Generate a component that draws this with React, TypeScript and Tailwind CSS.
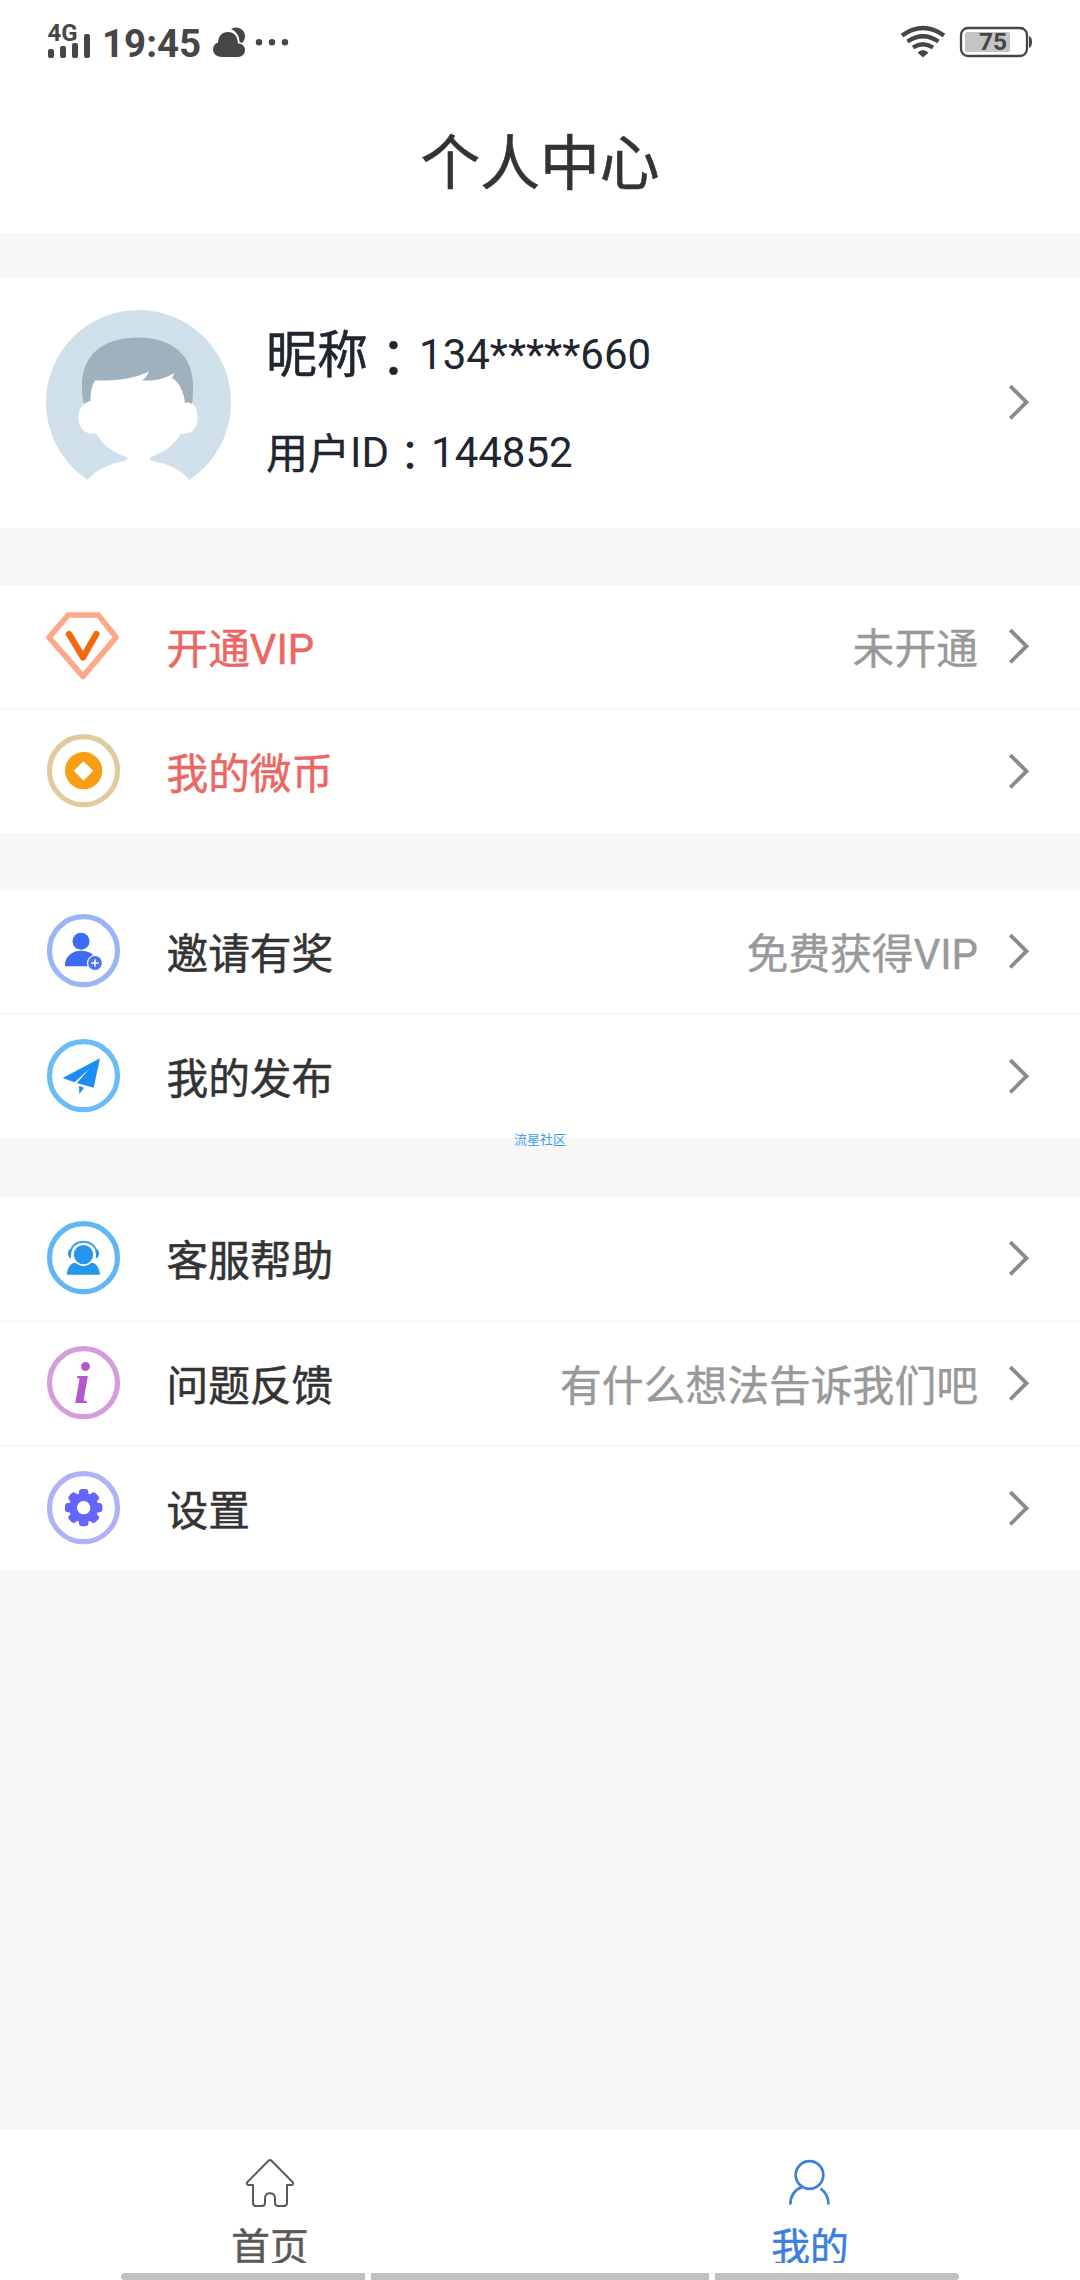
import type { ReactNode } from "react";

const ring = (color: string) => (
  <circle cx="112.500" cy="110" r="102" fill="none" stroke={color} strokeWidth="15.500" />
);

function Icon({ children }: { children: ReactNode }) {
  return (
    <svg className="h-[75px] w-[75px] shrink-0" viewBox="0 0 225 225">
      {children}
    </svg>
  );
}

const VipIcon = () => (
  <Icon>
    <path d="M67 18H157L210 85L111 202L9 85Z" fill="none" stroke="#fca98b" strokeWidth="17" strokeLinejoin="round" />
    <path d="M69 75L111 145L151 75" fill="none" stroke="#f2690d" strokeWidth="19" strokeLinecap="round" strokeLinejoin="round" />
  </Icon>
);

const CoinIcon = () => (
  <Icon>
    {ring("#e0cb9c")}
    <circle cx="113" cy="110" r="56" fill="#f99e14" />
    <path d="M112.500 85L138 110.500L112.500 136L87 110.500Z" fill="#fff" stroke="#fff" strokeWidth="5" strokeLinejoin="round" />
  </Icon>
);

const InviteIcon = () => (
  <Icon>
    {ring("#9ab5f6")}
    <circle cx="105" cy="82" r="25.500" fill="#3e69f3" />
    <path d="M57 157V150C60 124 80 110 106 110C130 110 144 120 150 140V157Z" fill="#3e69f3" />
    <circle cx="147" cy="147" r="22.500" fill="#4b74f3" stroke="#fff" strokeWidth="3.500" />
    <path d="M147 136V158M136 147H158" stroke="#fff" strokeWidth="4.500" />
  </Icon>
);

const PublishIcon = () => (
  <Icon>
    {ring("#69bdf5")}
    <path d="M162 58L50 117L86 130L130 89L93 132L143 146Z" fill="#1b8df5" />
    <path d="M99 141L114 146L100 165Z" fill="#1b8df5" />
  </Icon>
);

const ServiceIcon = () => (
  <Icon>
    {ring("#61b6f4")}
    <circle cx="112.500" cy="101" r="29" fill="#2496ec" />
    <path d="M73 98C74 50 151 50 152 98" fill="none" stroke="#3c9fec" strokeWidth="6" />
    <path d="M75 84C63 86 63 109 75 112ZM150 84C162 86 162 109 150 112Z" fill="#2496ec" />
    <path d="M62 161C64 142 74 125 88 125Q112 146 137 125C151 125 160 142 162 161Z" fill="#2496ec" />
  </Icon>
);

const FeedbackIcon = () => (
  <Icon>
    {ring("#d69ddd")}
    <text x="83" y="171" fontFamily="Liberation Serif, serif" fontSize="178" fontStyle="italic" fontWeight="700" fill="#b457cd">
      i
    </text>
  </Icon>
);

const SettingsIcon = () => (
  <Icon>
    {ring("#b1b1f8")}
    {[0, 45, 90, 135].map((a) => (
      <rect key={a} x="99" y="54" width="28" height="112" rx="9" fill="#6465fb" transform={`rotate(${a} 113 110)`} />
    ))}
    <circle cx="113" cy="110" r="44" fill="#6465fb" />
    <circle cx="113" cy="110" r="20" fill="#fff" />
  </Icon>
);

const Chevron = () => (
  <svg className="h-9 w-[22px] shrink-0" viewBox="0 0 22 36" fill="none" stroke="#8a8a8a" strokeWidth="3.800">
    <path d="M1.200 1L17.500 17.200L1.200 33.400" />
  </svg>
);

type RowProps = { icon: ReactNode; label: string; hint?: string; accent?: boolean };

function Row({ icon, label, hint, accent }: RowProps) {
  return (
    <div className="flex h-[123px] items-center bg-white pl-[46px] pr-[49px] leading-[60px]">
      {icon}
      <span className={`ml-[45.500px] mt-[6px] text-[41.700px] [-webkit-text-stroke:0.5px] ${accent ? "text-[#ec6663]" : "text-[#333]"}`}>{label}</span>
      <span className="ml-auto mt-[6px] mr-[31px] text-[41.800px] text-[#999] [-webkit-text-stroke:0.4px]">{hint}</span>
      <Chevron />
    </div>
  );
}

const Group = ({ children, className }: { children: ReactNode; className: string }) => (
  <section className={`flex flex-col gap-[2px] ${className}`}>{children}</section>
);

const Avatar = () => (
  <svg className="h-[186px] w-[186px] shrink-0" viewBox="0 0 186 186">
    <circle cx="92.500" cy="92.500" r="92.500" fill="#cfe0ea" />
    <path
      d="M42 60H133L142 93C148 91 152 100 151.500 109C151 119 145 125 135 123.500C129 134 118 143 104.500 147C103 149 104 150 107 151C122 154 136 160 143.500 170V186H41.500V170C49 160 63 154 78 151C81 150 82 149 80.500 147C67 143 56 134 50 123.500C40 125 33 119 32.500 109C32 100 36 93 42 93Z"
      fill="#fff"
    />
    <path
      d="M38 94C36 88 36 80 36 72C38 42 60 27.500 92 27.500C125 27.500 146 44 147 74C147 82 147 88 146 94C143 92 141 92 139 93C138 82 133 72 126 68L128.500 63C118 69 107 72 95.500 70C99 69 101 66 103 61.500C88 69 70 71 49 70.500C45 77 44.500 84 44.500 91C42 91 40 92 38 94Z"
      fill="#9eb1bc"
    />
  </svg>
);

const StatusBar = () => (
  <div className="flex h-[90px] items-start text-[#464646]">
    <div className="ml-[46px] mt-[18px] h-10 w-12">
      <svg className="h-10 w-12 overflow-visible" viewBox="46 18 48 40" fill="currentColor">
        <text x="47.500" y="40.500" fontSize="24" fontWeight="700" textLength="30" lengthAdjust="spacingAndGlyphs">4G</text>
        <rect x="48" y="49" width="6" height="9" rx="2" />
        <rect x="60" y="46" width="6" height="12" rx="2" />
        <rect x="72" y="43" width="6" height="15" rx="2" />
        <rect x="84" y="34" width="6" height="24" rx="2" />
      </svg>
    </div>
    <span className="ml-2 mt-[21px] w-[111px] text-[38.500px] font-bold leading-[46px]">19:45</span>
    <svg className="mt-5 h-10 w-20" viewBox="213 20 80 40" fill="currentColor">
      <path d="M231 29C237 25 245 29 245 36C245 39 244 41 242 43L239.500 42C239.500 36 236 31 231 29Z" />
      <path d="M222 57C217 57 213 54 213 49.500C213 46 215 43.500 218 42.500C218.500 36 222 32 228 32C234 32 237.500 36 238 43.500C242 43.500 245 46 245 50C245 54 242 57 238 57Z" />
      <circle cx="259" cy="42.300" r="3.200" />
      <circle cx="272" cy="42.300" r="3.200" />
      <circle cx="285" cy="42.300" r="3.200" />
    </svg>
    <svg className="ml-auto mr-[46px] mt-5 h-10 w-[136px]" viewBox="898 20 136 40" fill="none" stroke="currentColor">
      <path d="M902 35.500Q923 20.500 944 35.500M907.500 41.500Q923 31 938.500 41.500M913 47.500Q923 41 933 47.500" strokeWidth="4.200" />
      <path d="M917.500 52.500Q923 47.500 928.500 52.500L923 57.500Z" fill="currentColor" stroke="none" />
      <rect x="965" y="32" width="45" height="20" rx="2" fill="#c4c4c4" stroke="none" />
      <rect x="961" y="28" width="66" height="28" rx="7" strokeWidth="2.300" />
      <path d="M1029 36Q1032 37 1032 42T1029 48Z" fill="currentColor" stroke="none" />
      <text x="979" y="50" fontSize="24.500" fontWeight="700" fill="currentColor" stroke="none">75</text>
    </svg>
  </div>
);

export default function App() {
  return (
    <div className="relative flex h-[2280px] w-[1080px] flex-col overflow-hidden bg-[#f7f7f7] font-[Roboto,'Noto_Sans_CJK_SC',sans-serif]">
      <header className="h-[233px] bg-white">
        <StatusBar />
        <h1 className="mt-[30px] text-center text-[59.800px] leading-[90px] text-[#333] [-webkit-text-stroke:0.6px]">个人中心</h1>
      </header>

      <section className="mt-[45px] flex h-[250px] items-center bg-white pl-[46px] pr-[49px]">
        <Avatar />
        <div className="ml-[34px] flex flex-col gap-[32px] pb-[2px] font-[Roboto,'Noto_Sans_CJK_TC',sans-serif] text-[42px] leading-[66px] text-[#20252f]">
          <div className="flex items-baseline">
            <span className="translate-y-[4px] text-[51px] [-webkit-text-stroke:0.5px]">
              昵称<span className="inline-block translate-y-[4px]">：</span>
            </span>
            <span>134*****660</span>
          </div>
          <div>
            <span className="inline-block translate-y-[2px] [-webkit-text-stroke:0.4px]">用户</span>ID
            <span className="inline-block translate-y-[4px]">：</span>144852
          </div>
        </div>
        <span className="ml-auto">
          <Chevron />
        </span>
      </section>

      <Group className="mt-[57px]">
        <Row icon={<VipIcon />} label="开通VIP" hint="未开通" accent />
        <Row icon={<CoinIcon />} label="我的微币" accent />
      </Group>
      <Group className="mt-[57px]">
        <Row icon={<InviteIcon />} label="邀请有奖" hint="免费获得VIP" />
        <Row icon={<PublishIcon />} label="我的发布" />
      </Group>
      <Group className="mt-[59px]">
        <Row icon={<ServiceIcon />} label="客服帮助" />
        <Row icon={<FeedbackIcon />} label="问题反馈" hint="有什么想法告诉我们吧" />
        <Row icon={<SettingsIcon />} label="设置" />
      </Group>

      <span className="absolute left-[514px] top-[1130px] text-[13px] leading-5 text-[#3c9ff0]">流星社区</span>

      <footer className="mt-auto h-[151px] bg-white">
        <nav className="grid h-[134px] grid-cols-2 overflow-hidden text-[38.700px] leading-[56px]">
          <div className="flex h-[164px] flex-col items-center pt-[29px] text-[#5a5a5a]">
            <svg className="h-[50px] w-[50px] shrink-0" viewBox="0 0 50 50" fill="none" stroke="currentColor" strokeWidth="2">
              <path d="M8 27H3.500C1.500 27 1.500 25 2.500 24L23.500 2.800Q25 1.500 26.500 2.800L47.500 24C48.500 25 48.500 27 46.500 27H42V45Q42 48 39 48H33Q30 48 30 45V40C30 33.500 20 33.500 20 40V45Q20 48 17 48H11Q8 48 8 45Z" strokeLinejoin="round" />
            </svg>
            <span className="mt-[12px] [-webkit-text-stroke:0.5px]">首页</span>
          </div>
          <div className="flex h-[164px] flex-col items-center pt-[29px] text-[#3a80dc]">
            <svg className="h-[50px] w-[50px] shrink-0" viewBox="0 0 50 50" fill="none" stroke="currentColor" strokeWidth="2.700">
              <circle cx="24.500" cy="17" r="13.800" />
              <path d="M17 29C9 32 5.500 38 5.300 46.500M35.500 30.500C40.500 34 43.500 39.500 43.500 46.500" />
            </svg>
            <span className="mt-[12px] [-webkit-text-stroke:0.5px]">我的</span>
          </div>
        </nav>
        <div className="mx-[121px] mt-[10px] grid h-[7px] grid-cols-[244px_338px_244px] gap-[6px]">
          <span className="rounded-l-full bg-[#c1c1c1]" />
          <span className="bg-[#c1c1c1]" />
          <span className="rounded-r-full bg-[#c1c1c1]" />
        </div>
      </footer>
    </div>
  );
}
